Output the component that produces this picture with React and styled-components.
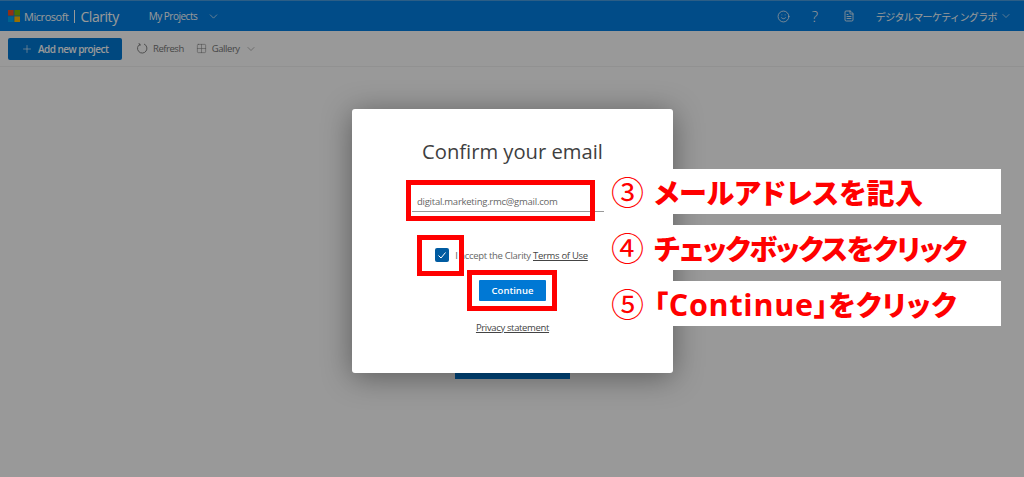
import React from 'react'
import styled, { createGlobalStyle } from 'styled-components'
import { Plus, ChevronDown, Smile, FileText, Grid2x2 } from 'lucide-react'

const GlobalStyle = createGlobalStyle`
  html, body {
    margin: 0;
    padding: 0;
    height: 100%;
    background: #fff;
    font-family: "Open Sans", "Noto Sans CJK JP", sans-serif;
  }
`

const Page = styled.div`
  position: relative;
  width: 1024px;
  height: 477px;
  overflow: hidden;
  display: flex;
  flex-direction: column;
`

const Header = styled.header`
  height: 30px;
  flex: none;
  display: flex;
  align-items: center;
  padding-left: 8px;
  background: #027fe3;
  border-top: 1px solid #4a9de0;
  color: #fff;
`

const Logo = styled.svg`
  width: 12px;
  height: 12px;
  flex: none;
`

const Brand = styled.span`
  font-size: 11px;
  margin-left: 4px;
  letter-spacing: -0.45px;
`

const Divider = styled.span`
  width: 1px;
  height: 13px;
  margin: 0 5px 0 6px;
  background: #fff;
`

const Product = styled.span`
  font-size: 14px;
  letter-spacing: -0.45px;
`

const NavLink = styled.span`
  font-size: 10px;
  letter-spacing: -0.5px;
  margin-left: 30px;
  display: flex;
  align-items: center;
  gap: 10px;
`

const HeaderRight = styled.div`
  margin-left: auto;
  padding-right: 12px;
  display: flex;
  align-items: center;
`

const Question = styled.span`
  font-size: 15px;
  font-weight: 300;
  width: 10px;
  margin: 0 23px 0 20px;
  text-align: center;
`

const UserName = styled.span`
  font-size: 10px;
  margin: 0 3px 0 21px;
  font-family: "Noto Sans CJK JP", sans-serif;
  letter-spacing: -0.6px;
`

const Toolbar = styled.div`
  height: 35px;
  flex: none;
  display: flex;
  align-items: center;
  padding-left: 8px;
  border-bottom: 1px solid #f2f2f2;
`

const PrimaryButton = styled.button`
  border: 0;
  padding: 0 0 0 13px;
  height: 22px;
  width: 114px;
  display: flex;
  align-items: center;
  gap: 5px;
  border-radius: 2px;
  background: #0078d4;
  color: #fff;
  font: 600 10px "Open Sans", sans-serif;
  letter-spacing: -0.55px;
`

const ToolItem = styled.span`
  display: flex;
  align-items: center;
  gap: 5px;
  margin-left: ${props => props.$left}px;
  color: #777;
  font-size: 9.5px;
  letter-spacing: -0.45px;
`

const Main = styled.main`
  flex: 1;
  display: flex;
  justify-content: center;
  padding: 276px 0 0 1px;
  background: #fff;
`

const BackButton = styled.div`
  width: 115px;
  height: 36px;
  background: #0078d4;
`

const Overlay = styled.div`
  position: absolute;
  inset: 0;
  background: rgba(0, 0, 0, 0.4);
  display: flex;
  justify-content: center;
  align-items: flex-start;
  padding: 109px 0 0 1px;
  box-sizing: border-box;
`

const Modal = styled.section`
  width: 321px;
  height: 264px;
  box-sizing: border-box;
  padding-top: 29px;
  background: #fff;
  border-radius: 3px;
  box-shadow: 0 4px 30px rgba(0, 0, 0, 0.4);
  display: flex;
  flex-direction: column;
  align-items: center;
  color: #444;
`

const Title = styled.h1`
  margin: 0;
  font-size: 20.2px;
  font-weight: 400;
  line-height: 26px;
  color: #3f3f3f;
`

const EmailField = styled.div`
  width: 192px;
  height: 26px;
  margin: 22px 9px 0 0;
  padding: 4px 0 0 5px;
  box-sizing: border-box;
  border-bottom: 1px solid #999;
  font-size: 9.5px;
  line-height: 24px;
  letter-spacing: -0.25px;
  color: #666;
`

const TermsRow = styled.label`
  display: flex;
  align-items: center;
  gap: 6px;
  margin: 36px 2px 0 0;
  font-size: 9.5px;
  letter-spacing: -0.3px;
  color: #666;
`

const CheckBox = styled.span`
  width: 14px;
  height: 14px;
  border-radius: 2px;
  background: #005ba1;
  display: flex;
  align-items: center;
  justify-content: center;
`

const TextLink = styled.a`
  color: #444;
  text-decoration: underline;
`

const ContinueButton = styled.button`
  width: 67px;
  height: 21px;
  margin-top: 18px;
  padding: 0;
  border: 0;
  border-radius: 1px;
  background: #0078d4;
  color: #fff;
  font: 600 9.5px "Open Sans", sans-serif;
`

const PrivacyLink = styled(TextLink)`
  margin-top: 20px;
  font-size: 9.5px;
  letter-spacing: -0.35px;
`

const Marker = styled.div`
  position: absolute;
  left: ${props => props.$x}px;
  top: ${props => props.$y}px;
  width: ${props => props.$w}px;
  height: ${props => props.$h}px;
  box-sizing: border-box;
  border: 5px solid #ff0000;
`

const Callouts = styled.div`
  position: absolute;
  left: 605px;
  top: 169px;
  width: 396px;
  display: flex;
  flex-direction: column;
  gap: 11px;
`

const Callout = styled.div`
  height: 45px;
  box-sizing: border-box;
  padding-left: 6px;
  background: #fff;
  display: flex;
  align-items: center;
  gap: 12px;
  color: #ff0000;
  font-family: "Noto Sans CJK JP", sans-serif;
  font-weight: 900;
  white-space: nowrap;
`

const CalloutNumber = styled.span`
  width: 31px;
  font-size: 33px;
  font-weight: 400;
  line-height: 1;
  text-align: center;
`

const CalloutText = styled.span`
  font-family: "Open Sans", "Noto Sans CJK JP", sans-serif;
  font-size: 28px;
  font-feature-settings: "palt";
  letter-spacing: ${props => props.$spacing || 0}px;
`

const LatinWord = styled.span`
  font-size: 30.5px;
  font-weight: 700;
`

const MsLogo = () => (
  <Logo viewBox="0 0 12 12">
    <rect width="5.6" height="5.6" fill="#f25022" />
    <rect x="6.4" width="5.6" height="5.6" fill="#7fba00" />
    <rect y="6.4" width="5.6" height="5.6" fill="#00a4ef" />
    <rect x="6.4" y="6.4" width="5.6" height="5.6" fill="#ffb900" />
  </Logo>
)

const RefreshIcon = () => (
  <svg width="11" height="11" viewBox="0 0 11 11" fill="none" stroke="currentColor" strokeWidth="0.9">
    <path d="M3 1.2 A4.7 4.7 0 1 0 7 1" />
    <path d="M1.6 0.6 L3.2 1.2 L2.8 3" />
  </svg>
)

const App = () => (
  <Page>
    <GlobalStyle />
    <Header>
      <MsLogo />
      <Brand>Microsoft</Brand>
      <Divider />
      <Product>Clarity</Product>
      <NavLink>
        My Projects
        <ChevronDown size={13} strokeWidth={1.2} />
      </NavLink>
      <HeaderRight>
        <Smile size={13} strokeWidth={1.4} />
        <Question>?</Question>
        <FileText size={12} strokeWidth={1.6} />
        <UserName>デジタルマーケティングラボ</UserName>
        <ChevronDown size={12} strokeWidth={1.2} />
      </HeaderRight>
    </Header>
    <Toolbar>
      <PrimaryButton>
        <Plus size={12} strokeWidth={1.2} />
        Add new project
      </PrimaryButton>
      <ToolItem $left={15}>
        <RefreshIcon />
        Refresh
      </ToolItem>
      <ToolItem $left={12}>
        <Grid2x2 size={11} strokeWidth={1.1} />
        Gallery
        <ChevronDown size={12} strokeWidth={1.1} />
      </ToolItem>
    </Toolbar>
    <Main>
      <BackButton />
    </Main>
    <Overlay>
      <Modal>
        <Title>Confirm your email</Title>
        <EmailField>digital.marketing.rmc@gmail.com</EmailField>
        <TermsRow>
          <CheckBox>
            <svg width="10" height="10" viewBox="0 0 10 10" fill="none" stroke="#fff" strokeWidth="1">
              <path d="M1.5 5.5 L4 8 L8.5 2.5" />
            </svg>
          </CheckBox>
          <span>I accept the Clarity <TextLink>Terms of Use</TextLink></span>
        </TermsRow>
        <ContinueButton>Continue</ContinueButton>
        <PrivacyLink>Privacy statement</PrivacyLink>
      </Modal>
    </Overlay>
    <Marker $x={406} $y={180} $w={189} $h={41} />
    <Marker $x={417} $y={235} $w={47} $h={41} />
    <Marker $x={467} $y={270} $w={90} $h={41} />
    <Callouts>
      <Callout>
        <CalloutNumber>③</CalloutNumber>
        <CalloutText $spacing={0.4}>メールアドレスを記入</CalloutText>
      </Callout>
      <Callout>
        <CalloutNumber>④</CalloutNumber>
        <CalloutText $spacing={-1.1}>チェックボックスをクリック</CalloutText>
      </Callout>
      <Callout>
        <CalloutNumber>⑤</CalloutNumber>
        <CalloutText $spacing={0.75}>「<LatinWord>Continue</LatinWord>」をクリック</CalloutText>
      </Callout>
    </Callouts>
  </Page>
)

export default App
